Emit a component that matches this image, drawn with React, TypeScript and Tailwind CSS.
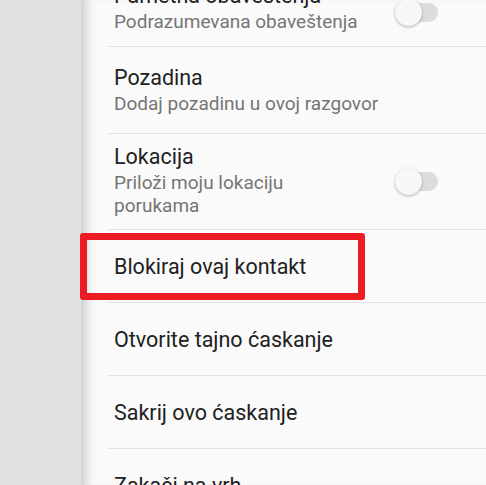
import React from 'react';

const Toggle: React.FC = () => (
  <div className="relative w-[43px] h-[27px] shrink-0">
    <div className="absolute left-[3px] right-0 top-[4px] h-[19px] rounded-full bg-[#dcdcdc]" />
    <div className="absolute left-0 top-0 w-[27px] h-[27px] rounded-full bg-[#f7f7f7] shadow-[0_1px_3px_rgba(0,0,0,0.3)]" />
  </div>
);

const Divider: React.FC = () => <div className="ml-[27px] h-px bg-[#e4e4e4]" />;

const simpleRows: string[] = ['Blokiraj ovaj kontakt', 'Otvorite tajno ćaskanje', 'Sakrij ovo ćaskanje', 'Zakači na vrh'];

export default function App() {
  return (
    <div
      className="relative flex w-[486px] h-[485px] overflow-hidden bg-[#dfe0e2]"
      style={{ fontFamily: 'Roboto, "Noto Sans", sans-serif' }}
    >
      <div className="w-[81px] shrink-0 bg-[#dfe0e2]" />

      <div className="flex-1 bg-[#fafafa] shadow-[inset_12px_0_10px_-6px_rgba(0,0,0,0.16)]">
        {/* Pametna obaveštenja (scrolled partly off screen) */}
        <div className="mt-[-34px] flex items-center pl-[33px] pr-[48px] pt-[18px] pb-[13px]">
          <div className="flex-1">
            <div className="text-[21.5px] leading-[24px] text-[#212121]">Pametna obaveštenja</div>
            <div className="mt-[2px] text-[19px] leading-[23px] text-[#757575]">Podrazumevana obaveštenja</div>
          </div>
          <div className="mt-[7px]">
            <Toggle />
          </div>
        </div>
        <Divider />

        {/* Pozadina */}
        <div className="pl-[33px] pr-[48px] pt-[19px] pb-[18px]">
          <div className="text-[21.5px] leading-[24px] text-[#212121]">Pozadina</div>
          <div className="mt-[2px] text-[19px] leading-[23px] text-[#757575]">Dodaj pozadinu u ovoj razgovor</div>
        </div>
        <Divider />

        {/* Lokacija */}
        <div className="flex items-center pl-[33px] pr-[48px] pt-[11px] pb-[12px]">
          <div className="flex-1">
            <div className="text-[21.5px] leading-[24px] text-[#212121]">Lokacija</div>
            <div className="mt-[2px] w-[210px] text-[19px] leading-[23px] text-[#757575]">
              Priloži moju lokaciju porukama
            </div>
          </div>
          <Toggle />
        </div>
        <Divider />

        {simpleRows.map((t) => (
          <div key={t}>
            <div className="flex h-[72px] items-center pl-[33px] pt-[3px] text-[21.5px] text-[#212121]">{t}</div>
            <Divider />
          </div>
        ))}
      </div>

      {/* red highlight annotation */}
      <div className="absolute left-[80px] top-[233px] w-[285px] h-[67px] rounded-[3px] border-[7px] border-[#ed1c24]" />
    </div>
  );
}
